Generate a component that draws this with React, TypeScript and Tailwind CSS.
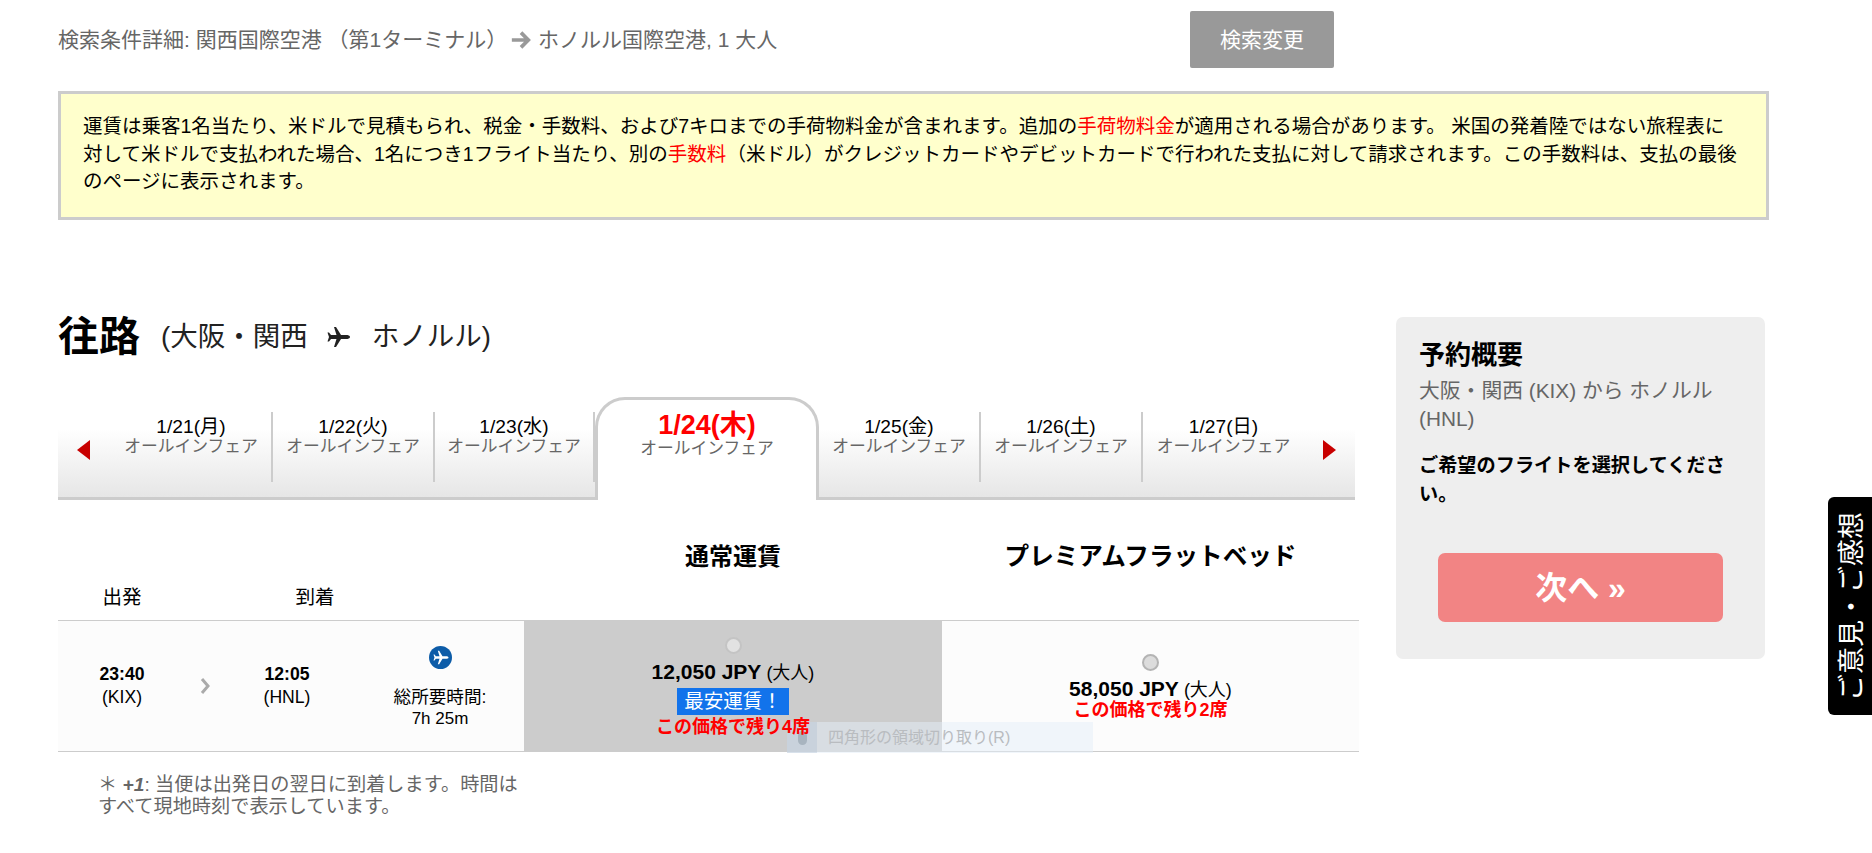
import React from "react";

const font = { fontFamily: '"Liberation Sans","Noto Sans CJK JP",sans-serif' };

const PlanePath = () => (
  <path d="M24 12c0-1.5-2-2-4-2h-5L10 2H8l2.5 8H5L3 7.5H1.5L3 12l-1.5 4.5H3L5 14h5.5L8 22h2l5-8h5c2 0 4-.5 4-2z" />
);

function Tab({ date, w }: { date: string; w: string }) {
  return (
    <div className={`${w} h-[88px] bg-linear-to-b from-white from-20% to-[#e6e6e6] border-b-[3px] border-[#ccc]`}>
      <div className="h-[70px] border-r-2 border-[#ccc] pt-[5px] text-center">
        <div className="text-[19.2px] leading-[20px] text-black">{date}</div>
        <div className="text-[16.8px] leading-[20px] text-[#666]">オールインフェア</div>
      </div>
    </div>
  );
}

function Radio({ light }: { light?: boolean }) {
  return light ? (
    <div className="w-[17px] h-[17px] rounded-full border-2 border-[#c4c4c4] bg-[#e2e2e2]" />
  ) : (
    <div className="w-[17px] h-[17px] rounded-full border-2 border-[#b4b4b4] bg-[#dcdcdc]" />
  );
}

export default function App() {
  return (
    <div style={font} className="relative w-full h-[853px] overflow-hidden bg-white pl-[58px] pt-[11px]">
      <div className="flex items-center h-[57px]">
        <div className="w-[1132px] text-[21px] leading-[32px] text-[#666] whitespace-nowrap">
          検索条件詳細: 関西国際空港 （第1ターミナル）
          <svg className="inline-block ml-[3px] w-[22px] h-[22px] align-[-4px]" viewBox="0 0 24 24" fill="none" stroke="#999" strokeWidth="4">
            <path d="M2 12h18M12 4l8 8-8 8" />
          </svg>{" "}
          ホノルル国際空港, 1 大人
        </div>
        <button className="w-[144px] h-[57px] bg-[#999] text-white text-[21px] rounded-[2px]">検索変更</button>
      </div>

      <div className="mt-[23px] w-[1711px] h-[129px] border-[3px] border-[#ccc] bg-[#ffc] pl-[22px] pr-[24px] pt-[19px] text-[19.5px] leading-[27.5px] text-black">
        運賃は乗客1名当たり、米ドルで見積もられ、税金・手数料、および7キロまでの手荷物料金が含まれます。追加の
        <span className="text-[#f00]">手荷物料金</span>
        が適用される場合があります。 米国の発着陸ではない旅程表に対して米ドルで支払われた場合、1名につき1フライト当たり、別の
        <span className="text-[#f00]">手数料</span>
        （米ドル）がクレジットカードやデビットカードで行われた支払に対して請求されます。この手数料は、支払の最後のページに表示されます。
      </div>

      <div className="flex mt-[97px]">
        <div className="w-[1301px]">
          <div className="flex items-center h-[40px] text-[#222]">
            <h1 className="text-[41px] leading-[40px] font-bold text-black">往路</h1>
            <span className="ml-[21px] text-[27.5px] leading-[40px] whitespace-nowrap">(大阪・関西</span>
            <svg className="ml-[18px] w-[24px] h-[24px]" viewBox="0 0 24 24" fill="#222">
              <PlanePath />
            </svg>
            <span className="ml-[22px] text-[27.5px] leading-[40px] whitespace-nowrap">ホノルル)</span>
          </div>

          <div className="flex items-end mt-[40px] w-[1297px] h-[103px]">
            <div className="w-[53px] h-[88px] bg-linear-to-b from-white from-20% to-[#e6e6e6] border-b-[3px] border-[#ccc] pl-[18px] pt-[28px]">
              <svg className="w-[15px] h-[20px]" viewBox="0 0 15 20" fill="#c80000">
                <path d="M14 0v20L1 10z" />
              </svg>
            </div>
            <Tab date="1/21(月)" w="w-[162px]" />
            <Tab date="1/22(火)" w="w-[162px]" />
            <Tab date="1/23(水)" w="w-[160px]" />
            <div className="w-[224px] h-[103px] bg-white border-x-[3px] border-t-[3px] border-[#ccc] rounded-t-[30px] pt-[11px] text-center">
              <div className="text-[27px] leading-[28px] font-bold text-[#f00]">1/24(木)</div>
              <div className="text-[16.8px] leading-[20px] text-[#666]">オールインフェア</div>
            </div>
            <Tab date="1/25(金)" w="w-[162px]" />
            <Tab date="1/26(土)" w="w-[162px]" />
            <div className="w-[161px] h-[88px] bg-linear-to-b from-white from-20% to-[#e6e6e6] border-b-[3px] border-[#ccc] pt-[5px] text-center">
              <div className="text-[19.2px] leading-[20px] text-black">1/27(日)</div>
              <div className="text-[16.8px] leading-[20px] text-[#666]">オールインフェア</div>
            </div>
            <div className="w-[51px] h-[88px] bg-linear-to-b from-white from-20% to-[#e6e6e6] border-b-[3px] border-[#ccc] pl-[18px] pt-[28px]">
              <svg className="w-[15px] h-[20px]" viewBox="0 0 15 20" fill="#c80000">
                <path d="M1 0v20l13-10z" />
              </svg>
            </div>
          </div>

          <div className="flex h-[120px] text-black">
            <div className="w-[466px] flex items-end pb-[9px] text-[19.5px] leading-[28px]">
              <div className="w-[128px] text-center">出発</div>
              <div className="ml-[64px] w-[130px] text-center">到着</div>
            </div>
            <div className="w-[418px] pt-[43px] text-center text-[24px] leading-[28px] font-bold">通常運賃</div>
            <div className="w-[417px] pt-[43px] text-center text-[24.6px] leading-[28px] font-bold">プレミアムフラットベッド</div>
          </div>

          <div className="relative flex h-[132px] border-y border-[#ccc] bg-[#fcfcfc] text-black">
            <div className="w-[466px] flex">
              <div className="w-[128px] flex flex-col items-center justify-center text-[17.6px] leading-[23px]">
                <div className="font-bold">23:40</div>
                <div>(KIX)</div>
              </div>
              <div className="w-[37px] flex items-center justify-center">
                <svg className="w-[10px] h-[16px]" viewBox="0 0 10 16" fill="none" stroke="#aaa" strokeWidth="3">
                  <path d="M2 1l6 7-6 7" />
                </svg>
              </div>
              <div className="w-[128px] flex flex-col items-center justify-center text-[17.6px] leading-[23px]">
                <div className="font-bold">12:05</div>
                <div>(HNL)</div>
              </div>
              <div className="flex-1 flex flex-col items-center pl-[5px] pt-[25px] text-[17px] leading-[22px]">
                <svg className="w-[23px] h-[23px]" viewBox="0 0 23 23">
                  <circle cx="11.5" cy="11.5" r="11.5" fill="#0d5ca8" />
                  <g transform="translate(3.5 3.5) scale(0.667)" fill="#fff">
                    <PlanePath />
                  </g>
                </svg>
                <div className="mt-[17px] text-[17.6px]">総所要時間:</div>
                <div>7h 25m</div>
              </div>
            </div>

            <div className="w-[418px] bg-[#ccc] flex flex-col items-center pt-[16px]">
              <Radio light />
              <div className="mt-[5px] text-[18px] leading-[26px] whitespace-nowrap">
                <span className="text-[21px] font-bold">12,050 JPY</span> (大人)
              </div>
              <div className="mt-[2px] h-[27px] w-[112px] bg-[#1273eb] text-white text-[19.5px] leading-[27px] text-center">最安運賃！</div>
              <div className="relative z-10 text-[18px] leading-[24px] font-bold text-[#f00]">この価格で残り4席</div>
            </div>

            <div className="w-[417px] flex flex-col items-center pt-[33px]">
              <Radio />
              <div className="mt-[7px] text-[18px] leading-[22px] whitespace-nowrap">
                <span className="text-[21px] font-bold">58,050 JPY</span> (大人)
              </div>
              <div className="text-[18px] leading-[18px] font-bold text-[#f00]">この価格で残り2席</div>
            </div>

            <div className="absolute left-[729px] top-[101px] w-[306px] h-[31px] flex items-center bg-[#e4eef8]/50">
              <div className="w-[30px] h-full flex items-center justify-center bg-[#b4c4d4]/40">
                <div className="w-[9px] h-[14px] rounded-full bg-[#a8b4bf]" />
              </div>
              <div className="ml-[11px] text-[16px] text-[#b9bcc0]">四角形の領域切り取り(R)</div>
            </div>
          </div>

          <div className="pl-[40px] pt-[22px] w-[470px] text-[19.2px] leading-[22px] text-[#666]">
            ＊<span className="font-bold italic"> +1</span>: 当便は出発日の翌日に到着します。時間はすべて現地時刻で表示しています。
          </div>
        </div>

        <div className="ml-[37px] w-[369px] h-[342px] rounded-[7px] bg-[#eee] pl-[23px] pr-[24px] pt-[22px]">
          <h2 className="text-[26px] leading-[32px] font-bold text-black">予約概要</h2>
          <div className="mt-[6px] text-[20.8px] leading-[28px] text-[#666]">大阪・関西 (KIX) から ホノルル (HNL)</div>
          <div className="mt-[18px] text-[19.2px] leading-[29px] font-bold text-black">ご希望のフライトを選択してください。</div>
          <button className="block mt-[44px] ml-[19px] w-[285px] h-[69px] rounded-[7px] bg-[#f28484] text-white text-[32px] font-bold">
            次へ »
          </button>
        </div>
      </div>

      <div className="absolute right-0 top-[497px] w-[44px] h-[218px] rounded-l-[6px] bg-black flex items-center justify-center pl-[3px]">
        <div className="[writing-mode:vertical-rl] [text-orientation:sideways] rotate-180 text-white text-[27px] leading-[40px] whitespace-nowrap">ご意見・ご感想</div>
      </div>
    </div>
  );
}
